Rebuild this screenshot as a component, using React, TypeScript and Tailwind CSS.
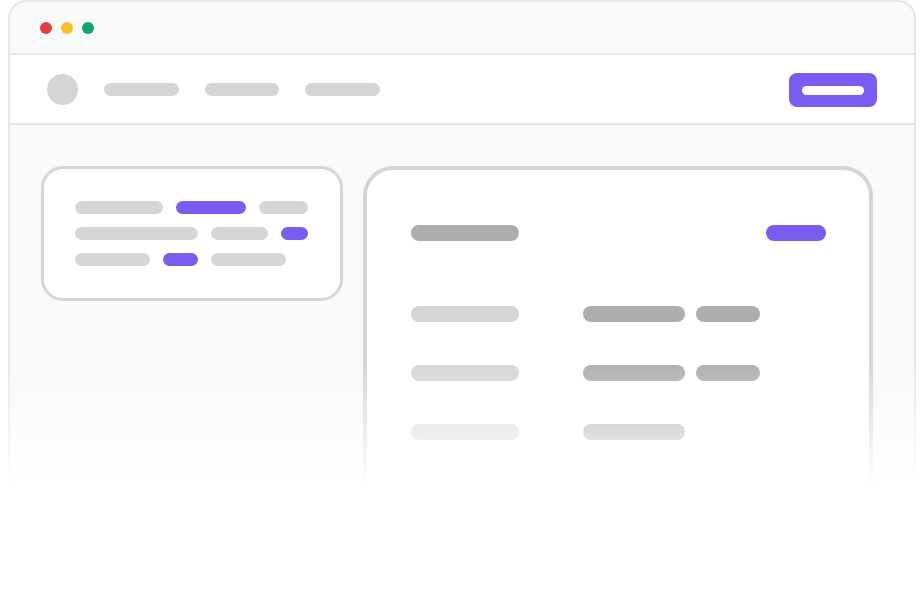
const Bar = ({ w, h = "h-[13px]", color = "bg-[#d4d5d7]" }: { w: string; h?: string; color?: string }) => (
  <div className={`${w} ${h} ${color} rounded-full shrink-0`} />
);

const rows = [
  { label: "bg-[#d4d5d7]", values: ["w-[102px]", "w-[64px]"] },
  { label: "bg-[#d4d5d7]", values: ["w-[102px]", "w-[64px]"] },
  { label: "bg-[#d4d5d7]", values: ["w-[102px]"] },
];

export default function App() {
  return (
    <div className="relative w-[924px] h-[600px] overflow-hidden bg-white">
      {/* Browser frame */}
      <div className="ml-[8px] w-[908px] h-[600px] border-2 border-[#e5e6e8] rounded-t-[18px] bg-[#f8f9f9] flex flex-col">
        {/* Title bar */}
        <div className="h-[53px] shrink-0 flex items-center gap-[9px] pl-[30px] border-b-2 border-[#e5e6e8]">
          <div className="w-3 h-3 rounded-full bg-[#e53e3e]" />
          <div className="w-3 h-3 rounded-full bg-[#f9c02c]" />
          <div className="w-3 h-3 rounded-full bg-[#0fa46b]" />
        </div>

        {/* Nav */}
        <div className="h-[70px] shrink-0 bg-white flex items-center pl-[37px] pr-[37px] border-b-2 border-[#e5e6e8]">
          <div className="w-[31px] h-[31px] rounded-full bg-[#d4d5d7] mr-[26px]" />
          <div className="flex gap-[26px]">
            <Bar w="w-[75px]" />
            <Bar w="w-[74px]" />
            <Bar w="w-[75px]" />
          </div>
          <div className="ml-auto mt-[2px] w-[88px] h-[34px] rounded-[8px] bg-[#7a5cf0] flex items-center justify-center">
            <div className="w-[62px] h-[9px] rounded-full bg-white" />
          </div>
        </div>

        {/* Content */}
        <div className="flex gap-[20px] pl-[31px] pt-[41px]">
          {/* Left card */}
          <div className="w-[302px] h-[135px] shrink-0 bg-white border-[3px] border-[#d4d5d7] rounded-[22px] pl-[31px] pt-[32px] flex flex-col gap-[13px]">
            <div className="flex gap-[13px]">
              <Bar w="w-[88px]" />
              <Bar w="w-[70px]" color="bg-[#7a5cf0]" />
              <Bar w="w-[49px]" />
            </div>
            <div className="flex gap-[13px]">
              <Bar w="w-[123px]" />
              <Bar w="w-[57px]" />
              <Bar w="w-[27px]" color="bg-[#7a5cf0]" />
            </div>
            <div className="flex gap-[13px]">
              <Bar w="w-[75px]" />
              <Bar w="w-[35px]" color="bg-[#7a5cf0]" />
              <Bar w="w-[75px]" />
            </div>
          </div>

          {/* Right card */}
          <div className="w-[510px] h-[360px] shrink-0 bg-white border-4 border-[#d4d5d7] rounded-[30px] pl-[44px] pr-[43px] pt-[55px]">
            <div className="flex items-center justify-between">
              <Bar w="w-[108px]" h="h-[16px]" color="bg-[#acadaf]" />
              <Bar w="w-[60px]" h="h-[16px]" color="bg-[#7a5cf0]" />
            </div>
            <div className="mt-[65px] flex flex-col gap-[43px]">
              {rows.map((row, i) => (
                <div key={i} className="flex items-center">
                  <Bar w="w-[108px]" h="h-[16px]" color={row.label} />
                  <div className="ml-[64px] flex gap-[11px]">
                    {row.values.map((v, j) => (
                      <Bar key={j} w={v} h="h-[16px]" color="bg-[#acadaf]" />
                    ))}
                  </div>
                </div>
              ))}
            </div>
          </div>
        </div>
      </div>

      {/* Fade-out overlay */}
      <div className="absolute inset-x-0 top-[360px] bottom-0 bg-[linear-gradient(to_bottom,rgba(255,255,255,0)_0px,#ffffff_125px)]" />
    </div>
  );
}
